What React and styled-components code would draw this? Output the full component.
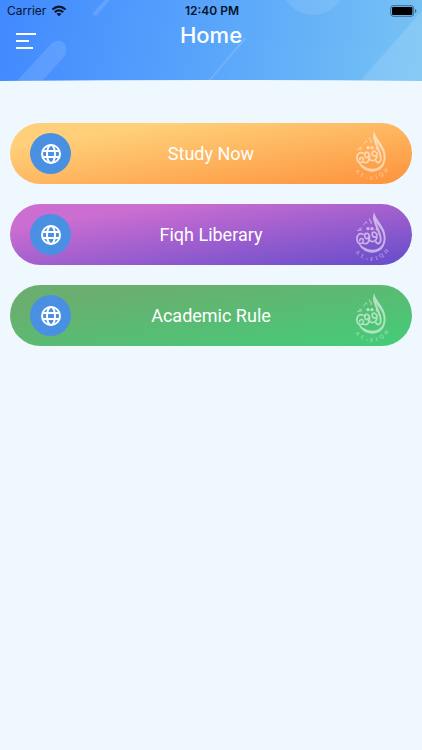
import React from "react";
import styled, { createGlobalStyle } from "styled-components";

const GlobalStyle = createGlobalStyle`
  * { box-sizing: border-box; }
  body {
    margin: 0;
    background: #f0f8ff;
    font-family: Roboto, "Liberation Sans", sans-serif;
  }
`;

const Screen = styled.div`
  min-height: 100vh;
  background: #f0f8ff;
`;

const Header = styled.header`
  position: relative;
  height: 81px;
  overflow: hidden;
  background: linear-gradient(100deg, #4189ff 0%, #59a5fb 50%, #77c3f4 100%);
  font-family: Inter, "Liberation Sans", sans-serif;
`;

const HeaderArt = styled.svg`
  position: absolute;
  inset: 0;
  width: 100%;
  height: 100%;
`;

const StatusBar = styled.div`
  position: relative;
  display: grid;
  grid-template-columns: 1fr auto 1fr;
  align-items: center;
  height: 22px;
  padding: 0 5px 0 7px;
  font-size: 12px;
  line-height: 22px;
  color: #07142b;
`;

const Carrier = styled.span`
  display: flex;
  align-items: center;
  gap: 5px;
`;

const Time = styled.time`
  font-weight: 600;
`;

const Battery = styled.svg`
  justify-self: end;
`;

const TitleBar = styled.div`
  position: relative;
  display: grid;
  grid-template-columns: 36px 1fr 36px;
  height: 38px;
  padding: 0 8px;
`;

const MenuButton = styled.button`
  display: grid;
  place-items: center;
  padding: 0;
  border: 0;
  background: none;
  cursor: pointer;
`;

const Title = styled.h1`
  margin: 0;
  text-align: center;
  color: #fff;
  font-size: 22px;
  font-weight: 500;
  line-height: 26px;
`;

const Menu = styled.main`
  display: flex;
  flex-direction: column;
  gap: 20px;
  padding: 42px 10px;
`;

const MenuItem = styled.button`
  display: grid;
  grid-template-columns: 41px 1fr 41px;
  align-items: center;
  width: 100%;
  height: 61px;
  padding: 0 20px;
  border: 0;
  border-radius: 31px;
  background: linear-gradient(to bottom right, ${(p) => p.$from} 20%, ${(p) => p.$to});
  color: #fff;
  font-family: inherit;
  font-size: 18px;
  line-height: 24px;
  cursor: pointer;
`;

const IconDisc = styled.span`
  display: grid;
  place-items: center;
  width: 41px;
  height: 41px;
  border-radius: 50%;
  background: #4a90e2;
`;

const Emblem = styled.svg`
  width: 40px;
  height: 56px;
  opacity: 0.55;
`;

function WifiIcon() {
  return (
    <svg width="16" height="12" viewBox="0 0 16 12" fill="none" stroke="#07142b" strokeWidth="2.2" aria-hidden="true">
      <path d="M1.4 4.5Q8-1.3 14.6 4.5" />
      <path d="M3.8 7.2Q8 3.6 12.2 7.2" />
      <path d="M5.5 8.8Q8 7 10.5 8.8L8 11.3Z" fill="#07142b" stroke="none" />
    </svg>
  );
}

function GlobeIcon() {
  return (
    <svg width="22" height="22" viewBox="0 0 22 22" fill="none" stroke="#fff" strokeWidth="2" aria-hidden="true">
      <circle cx="11" cy="11" r="9" />
      <ellipse cx="11" cy="11" rx="4" ry="9" />
      <path d="M2.6 8H19.4M2.6 14H19.4" />
    </svg>
  );
}

function FiqhEmblem({ id }) {
  return (
    <Emblem viewBox="0 0 120 168" aria-hidden="true">
      <path
        fill="#fff"
        d="M69 14C73 39 105 58 104 94C103 121 88 137 65 137C42 137 27 124 19 102C33 120 47 128 65 128C84 127 97 116 98 95C99 67 73 51 66 31Z"
      />
      <g fill="none" stroke="#fff" strokeLinecap="round" strokeLinejoin="round">
        <path strokeWidth="6" d="M69 33C73 60 92 79 89 101C87 111 79 112 75 105" />
        <path strokeWidth="5" d="M78 82C70 70 60 76 65 87C69 93 77 91 79 83M78 90C75 107 60 106 53 98" />
        <path strokeWidth="5" d="M55 86C50 73 38 79 42 91C45 98 54 94 55 86C58 103 49 113 37 109" />
        <path strokeWidth="5" d="M36 82C26 76 16 84 18 99C20 113 37 113 37 101C37 93 27 92 26 101" />
        <path strokeWidth="3" d="M26 64L31 71M20 71Q29 71 32 63M38 53L43 48M55 36L58 43M60 50L61 44M45 44L48 48" />
      </g>
      <g fill="#fff">
        <circle cx="51" cy="65" r="5" />
        <circle cx="63" cy="65" r="5" />
        <circle cx="78" cy="67" r="4" />
      </g>
      <path id={id} d="M12 136Q62 190 116 130" fill="none" />
      <text fill="#fff" fontFamily="Liberation Serif, serif" fontSize="17">
        <textPath href={`#${id}`}>{"A\u00a0 L\u00a0 -\u00a0 F\u00a0 I\u00a0 Q\u00a0 H"}</textPath>
      </text>
    </Emblem>
  );
}

const items = [
  { label: "Study Now", from: "#ffcf79", to: "#fd923b" },
  { label: "Fiqh Liberary", from: "#cb6dd1", to: "#644ccb" },
  { label: "Academic Rule", from: "#6aaf70", to: "#42cd78" },
];

export default function App() {
  return (
    <Screen>
      <GlobalStyle />
      <Header>
        <HeaderArt viewBox="0 0 422 81" preserveAspectRatio="none" aria-hidden="true">
          <path d="M17 81L50 45C60 34 73 47 63 58L42 81Z" fill="#fff" fillOpacity=".12" />
          <path d="M92 14L105 0H110L97 15Q95 17 92 14Z" fill="#fff" fillOpacity=".13" />
          <path d="M208 81L243 39Q245 37 246 39L210 81Z" fill="#fff" fillOpacity=".14" />
          <circle cx="313" cy="-17" r="32" fill="#fff" fillOpacity=".1" />
          <path d="M360 81L422 11V81Z" fill="#fff" fillOpacity=".13" />
          <path d="M0 81Q211 79 422 81Z" fill="#f0f8ff" />
        </HeaderArt>
        <StatusBar>
          <Carrier>Carrier <WifiIcon /></Carrier>
          <Time>12:40 PM</Time>
          <Battery width="27" height="12" viewBox="0 0 27 12" role="img" aria-label="Battery full">
            <rect x=".7" y=".7" width="23" height="10.6" rx="2.6" fill="none" stroke="#07142b" strokeOpacity=".5" />
            <rect x="2" y="2" width="20.4" height="8" rx="1.2" fill="#000" />
            <path d="M25 4Q28 6 25 8Z" fill="#07142b" fillOpacity=".5" />
          </Battery>
        </StatusBar>
        <TitleBar>
          <MenuButton type="button" aria-label="Open menu">
            <svg width="22" height="18" viewBox="0 0 22 18" stroke="#fff" strokeWidth="2" aria-hidden="true">
              <path d="M1 2H21M1 9H14M1 16H18" />
            </svg>
          </MenuButton>
          <Title>Home</Title>
        </TitleBar>
      </Header>
      <Menu>
        {items.map((item, i) => (
          <MenuItem key={item.label} type="button" $from={item.from} $to={item.to}>
            <IconDisc><GlobeIcon /></IconDisc>
            <span>{item.label}</span>
            <FiqhEmblem id={`emblem-arc-${i}`} />
          </MenuItem>
        ))}
      </Menu>
    </Screen>
  );
}
